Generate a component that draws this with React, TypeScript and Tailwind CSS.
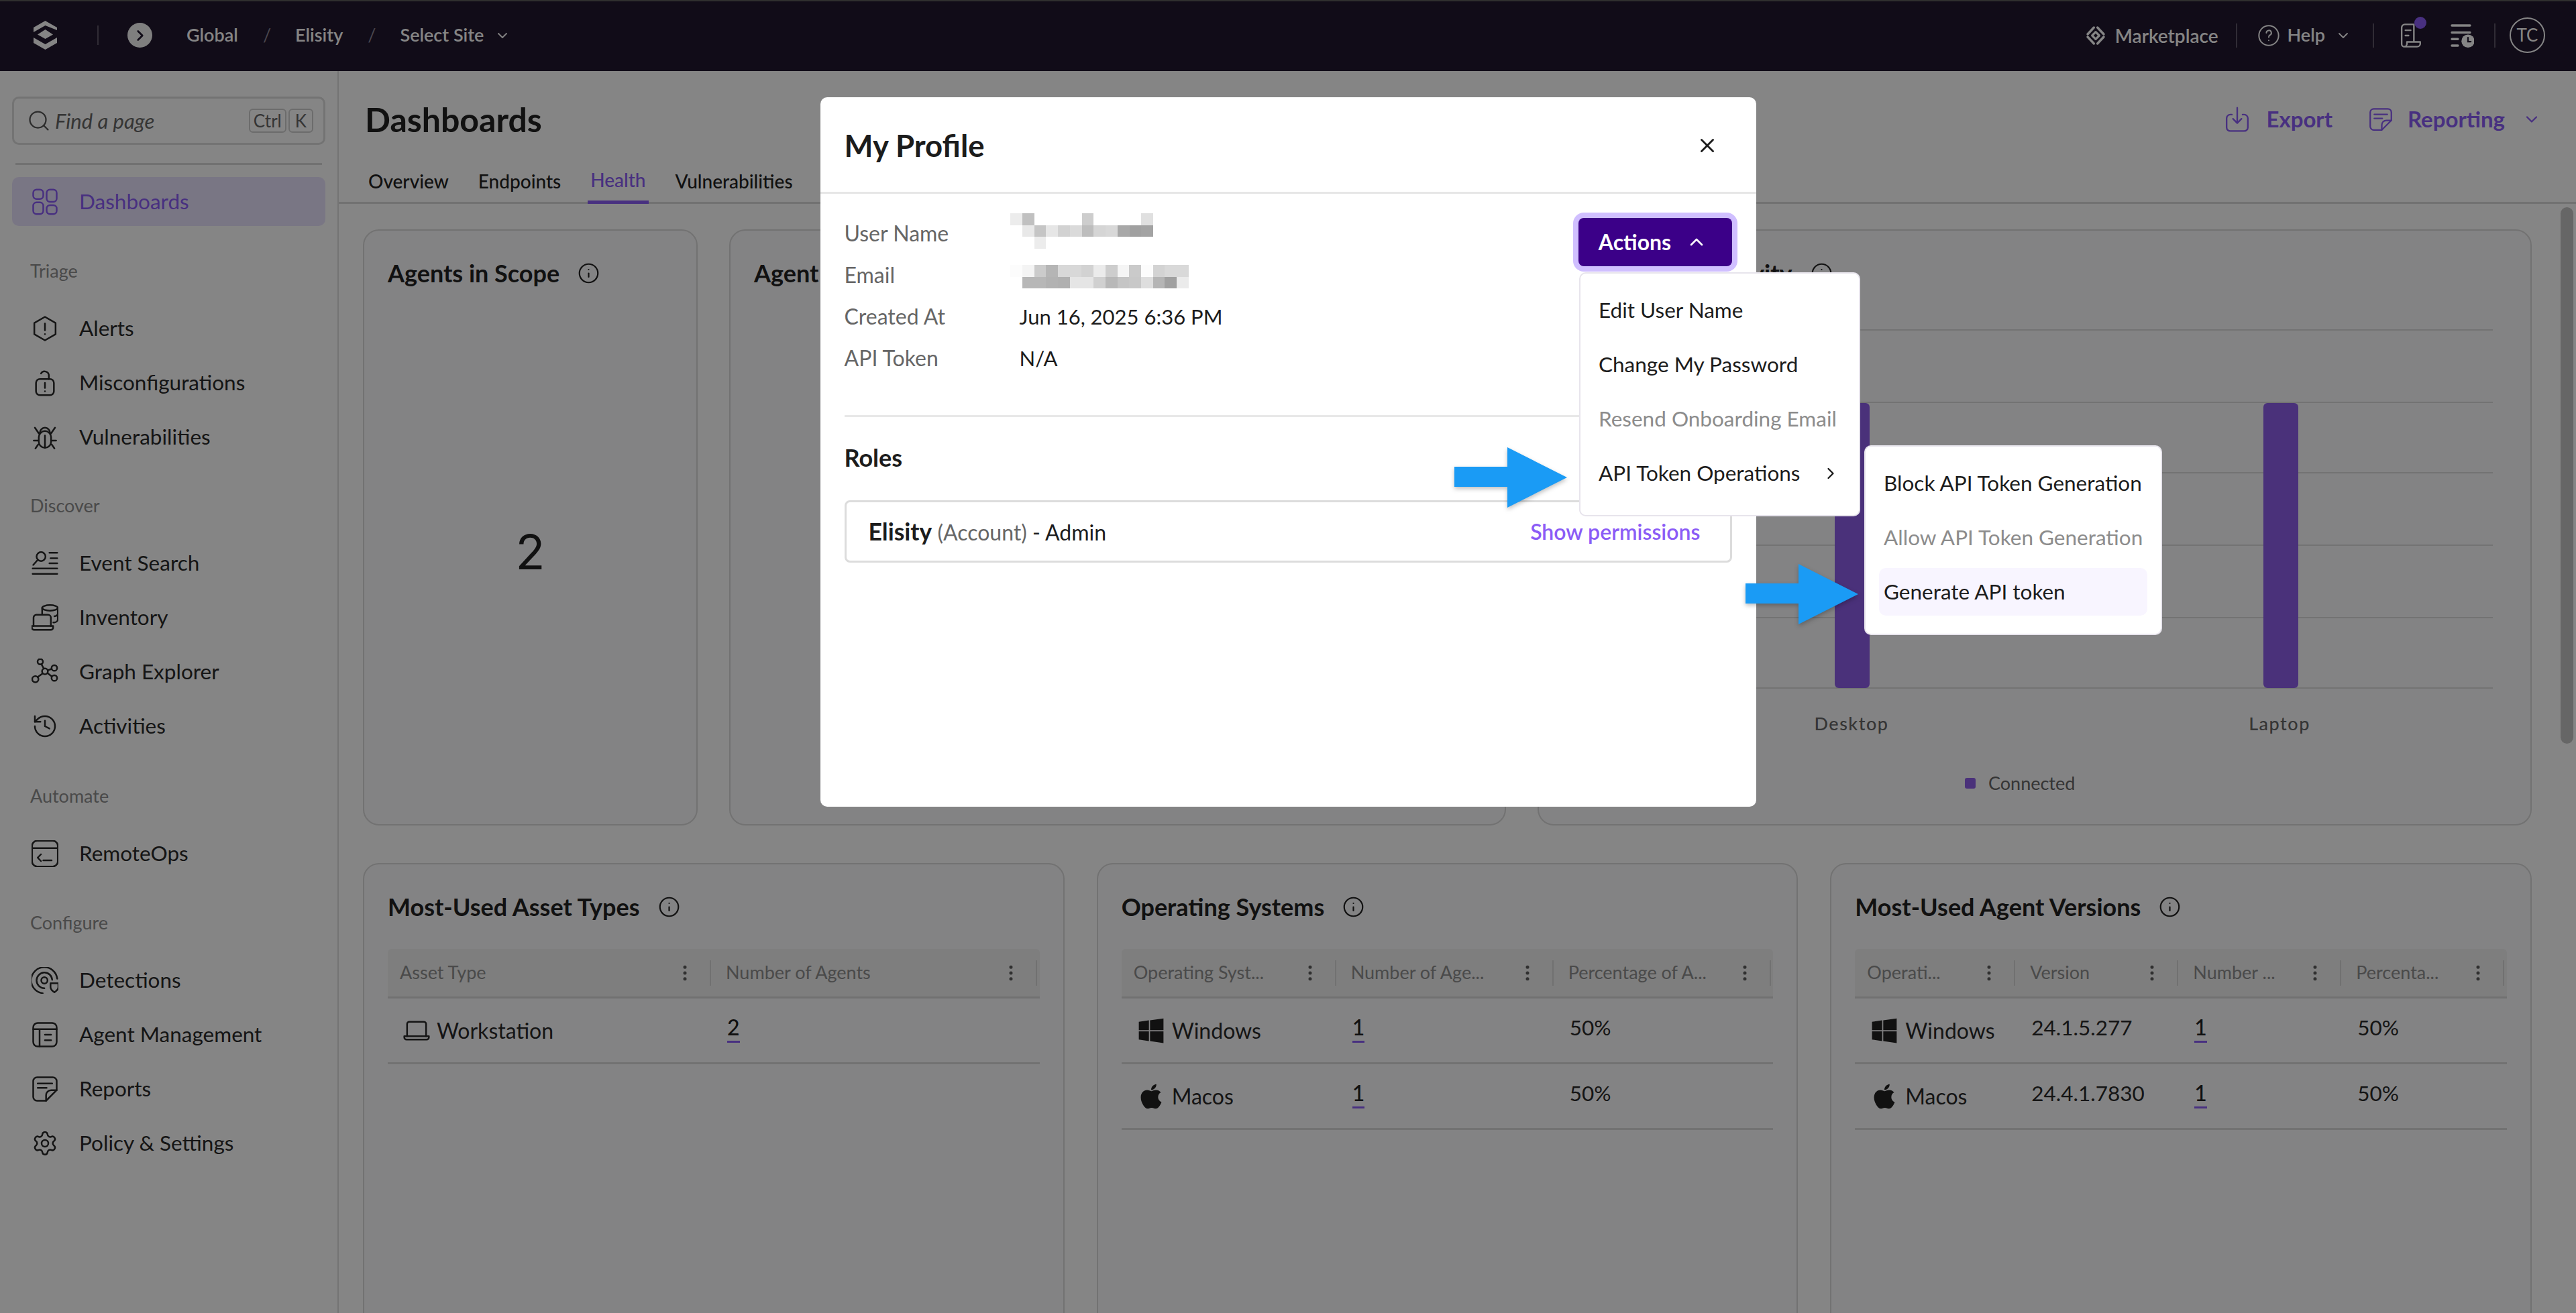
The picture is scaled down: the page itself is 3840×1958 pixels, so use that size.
import React from 'react'
import { ChevronDown, ChevronRight, ChevronUp, EllipsisVertical, History, Info, Search, Settings, X } from 'lucide-react'
import { FaApple, FaWindows } from 'react-icons/fa'

type IconProps = { className?: string }

const Svg: React.FC<React.PropsWithChildren<IconProps>> = ({ className, children }) => (
  <svg viewBox="0 0 24 24" fill="none" stroke="currentColor" strokeWidth={1.5} strokeLinecap="round" strokeLinejoin="round" className={className}>
    {children}
  </svg>
)

const DashboardsIcon = (p: IconProps) => (
  <Svg {...p}>
    <rect x="1.5" y="1" width="9" height="8.5" rx="3" />
    <rect x="1.5" y="12.5" width="9" height="10.5" rx="3" />
    <rect x="13.5" y="1" width="9" height="11" rx="3" />
    <rect x="13.5" y="15" width="9" height="8" rx="3" />
  </Svg>
)
const AlertIcon = (p: IconProps) => (
  <Svg {...p}>
    <path d="M12 1.5 21.5 7v10L12 22.5 2.5 17V7z" />
    <path d="M12 7.5v6M12 17v.01" />
  </Svg>
)
const LockIcon = (p: IconProps) => (
  <Svg {...p}>
    <rect x="4" y="8.5" width="16" height="14.5" rx="3.5" />
    <path d="M8.5 3.5A3.8 3.8 0 0 1 15.5 5.5V8.5" />
    <path d="M12 12v4.5M12 19.5v.01" />
  </Svg>
)
const BugIcon = (p: IconProps) => (
  <Svg {...p}>
    <path d="M6.5 12a5.5 5.5 0 0 1 11 0v4a5.5 5.5 0 0 1-11 0z" />
    <path d="M7.5 8a4.5 4.5 0 0 1 9 0M12 10.5V21.5M6.500 15H2M17.500 15H22M3 3.500l3.500 5M21 3.500l-3.500 5M3.500 22l2.500-3.500M20.500 22 18 18.500" />
  </Svg>
)
const EventIcon = (p: IconProps) => (
  <Svg {...p}>
    <circle cx="8.500" cy="6" r="4" />
    <path d="M5.500 9 1.500 13.500M16 2.500h7M17 7.500h6M16 12h7M1 16.700h22M1 21.500h22" />
  </Svg>
)
const InventoryIcon = (p: IconProps) => (
  <Svg {...p}>
    <path d="M1.800 19.500V12a2.500 2.500 0 0 1 2.500-2.500h10.500a2.500 2.500 0 0 1 2.500 2.500v7.500" />
    <path d="M0.300 19.500h19v1.500a2 2 0 0 1-2 2H2.300a2 2 0 0 1-2-2z" />
    <ellipse cx="16.500" cy="3.300" rx="7" ry="2.500" />
    <path d="M9.500 3.300v6M23.500 3.300v10a3 3 0 0 1-3 3h-1M23.500 8.500c0 1.200-1.500 2-3 2.300" />
  </Svg>
)
const GraphIcon = (p: IconProps) => (
  <Svg {...p}>
    <circle cx="12" cy="11.500" r="2.600" />
    <circle cx="7.800" cy="2.800" r="2.400" />
    <circle cx="20.400" cy="8.500" r="2.500" />
    <circle cx="20.400" cy="17.500" r="2.500" />
    <circle cx="3.400" cy="18.500" r="2.800" />
    <path d="M8.800 5 11 9M14.500 10.600l3.500-1.300M14.300 13l3.800 3M10 13.300l-4.600 3.400" />
  </Svg>
)
const TerminalIcon = (p: IconProps) => (
  <Svg {...p}>
    <rect x="0.500" y="0.500" width="23" height="23" rx="4.500" />
    <path d="M0.500 7h23M8.400 12.600 5.500 15.600l2.900 3M10.500 18h7.500" />
  </Svg>
)
const DetectionIcon = (p: IconProps) => (
  <Svg {...p}>
    <circle cx="11.500" cy="12" r="2.800" />
    <path d="M11.500 19A7 7 0 1 1 18.500 11.500M10 23.500A11.700 11.700 0 1 1 23 10.500" />
    <path d="M17 14.500h7v3.500c0 2-2 3.700-3.500 4.700C19 21.700 17 20 17 18z" />
  </Svg>
)
const AgentIcon = (p: IconProps) => (
  <Svg {...p}>
    <rect x="1.500" y="1.500" width="21" height="21" rx="4" />
    <path d="M1.500 7h21M7.200 7v15.500M12 12h5.500M12 17h5.500" />
  </Svg>
)
const ReportIcon = (p: IconProps) => (
  <Svg {...p}>
    <path d="M5 1.500h14a3.500 3.500 0 0 1 3.500 3.500v8L13 22.500H5A3.500 3.500 0 0 1 1.500 19V5A3.500 3.500 0 0 1 5 1.500z" />
    <path d="M22.500 13h-5a4.500 4.500 0 0 0-4.500 4.500v5M5.500 7h13M5.500 11h8" />
  </Svg>
)
const ExportIcon = (p: IconProps) => (
  <Svg {...p}>
    <path d="M7 7.500H5.500a3.500 3.500 0 0 0-3.500 3.500v8.500A3.500 3.500 0 0 0 5.500 23h13a3.500 3.500 0 0 0 3.500-3.500V11a3.500 3.500 0 0 0-3.500-3.500H17" />
    <path d="M12 1v14M8 11.500l4 4 4-4" />
  </Svg>
)
const LaptopIcon = (p: IconProps) => (
  <Svg {...p}>
    <path d="M3.500 17V6a2 2 0 0 1 2-2h13a2 2 0 0 1 2 2v11" />
    <path d="M1 17h22v1a2 2 0 0 1-2 2H3a2 2 0 0 1-2-2z" />
  </Svg>
)
const MarketIcon = (p: IconProps) => (
  <Svg {...p}>
    <path d="M12 8l4 4-4 4-4-4z" strokeWidth={2.400} />
    <path d="M10 3 3 10.500M14 3l7 7.500M10 21 3 13.500M14 21l7-7.500" strokeWidth={2.600} />
  </Svg>
)
const HelpIcon = (p: IconProps) => (
  <Svg {...p}>
    <circle cx="12" cy="12" r="11" />
    <path d="M9.300 9a2.800 2.800 0 1 1 4 2.600c-.9.500-1.300 1-1.300 2.200M12 17.500v.01" />
  </Svg>
)
const ScrollIcon = (p: IconProps) => (
  <Svg {...p}>
    <path d="M4.500 20V4.500a3 3 0 0 1 3-3H16M16 1.500V18M4.500 20a2.500 2.500 0 0 0 2.500 2.500h12a3 3 0 0 0 3-3V18H9.500v1.500a3 3 0 0 1-3 3" />
    <path d="M8 7h5M8 12h3" />
  </Svg>
)
const QueueIcon = (p: IconProps) => (
  <svg viewBox="0 0 24 24" fill="none" stroke="currentColor" strokeWidth={2.200} strokeLinecap="round" className={p.className}>
    <path d="M2 2h18M2 9h18M2 15.500h6M2 22h6" />
    <circle cx="18" cy="17.500" r="6.500" fill="currentColor" stroke="none" />
    <path d="M18 14v4h2.800" stroke="#21172e" strokeWidth={1.500} />
  </svg>
)
const Logo = (p: IconProps) => (
  <svg viewBox="0 0 35 43" fill="currentColor" className={p.className}>
    <polygon points="0,10 17.500,0 35,10 35,14 17.500,7 0,17" />
    <polygon points="17.500,13 29,20.500 17.500,27 6,20.500" />
    <polygon points="0,25 17.500,35 35,25 35,33 17.500,43 0,33" />
  </svg>
)

const Arrow = ({ className }: IconProps) => (
  <svg viewBox="0 0 168 90" className={className}>
    <polygon points="0,29 79,29 79,0 168,45 79,90 79,59 0,59" fill="#1a9bf5" />
  </svg>
)

const Mosaic = ({ rows, className }: { rows: (string | null)[][]; className?: string }) => (
  <svg viewBox={`0 0 ${rows[0].length * 17.700} ${rows.length * 17.500}`} shapeRendering="crispEdges" className={className}>
    {rows.map((row, y) =>
      row.map((c, x) => (c ? <rect key={`${x}-${y}`} x={x * 17.700} y={y * 17.500} width="17.800" height="17.600" fill={c} /> : null)),
    )}
  </svg>
)

const nameBlur = [
  ['#ececec', '#c0c0c0', null, null, null, null, '#cdcdcd', null, null, null, null, '#e0e0e0'],
  [null, '#e8e8e8', '#c5c5c5', '#e6e6e6', '#d2d2d2', '#dadada', '#bdbdbd', '#d5d5d5', '#d8d8d8', '#a8a8a8', '#a0a0a0', '#a3a3a3'],
  [null, null, '#ececec', null, null, null, null, null, null, null, null, null],
]
const mailBlur = [
  ['#fcfcfc', '#f4f4f4', '#cbcbcb', '#b5b5b5', '#d8d8d8', '#d8d8d8', '#d2d2d2', '#ebebeb', '#cdcdcd', '#f5f5f5', '#cacaca', '#fcfcfc', '#d3d3d3', '#d9d9d9', '#d9d9d9'],
  [null, '#b7b7b7', '#b7b7b7', '#b2b2b2', '#b0b0b0', '#e5e5e5', '#e5e5e5', '#d0d0d0', '#b8b8b8', '#c5c5c5', '#c8c8c8', '#dedede', '#b5b5b5', '#a0a0a0', '#ebebeb'],
]

const NavRow = ({ icon: Icon, label }: { icon: React.FC<IconProps>; label: string }) => (
  <div className="flex h-[81px] items-center pl-[29px] text-[31.5px] text-[#2a2a2a]">
    <Icon className="h-[40px] w-[40px] shrink-0" />
    <span className="ml-[31px]">{label}</span>
  </div>
)

const navGroups: { title: string; gap: string; items: [React.FC<IconProps>, string][] }[] = [
  { title: 'Triage', gap: 'mt-[40px]', items: [[AlertIcon, 'Alerts'], [LockIcon, 'Misconfigurations'], [BugIcon, 'Vulnerabilities']] },
  { title: 'Discover', gap: 'mt-[40px]', items: [[EventIcon, 'Event Search'], [InventoryIcon, 'Inventory'], [GraphIcon, 'Graph Explorer'], [(p) => <History strokeWidth={1.500} className={p.className} />, 'Activities']] },
  { title: 'Automate', gap: 'mt-[42px]', items: [[TerminalIcon, 'RemoteOps']] },
  { title: 'Configure', gap: 'mt-[41px]', items: [[DetectionIcon, 'Detections'], [AgentIcon, 'Agent Management'], [ReportIcon, 'Reports'], [(p) => <Settings strokeWidth={1.500} className={p.className} />, 'Policy & Settings']] },
]

const Sidebar = () => (
  <aside className="flex w-[505px] shrink-0 flex-col border-r-2 border-[#dedede] px-[18px]">
    <div className="mt-[38px] flex h-[72px] items-center rounded-[10px] border-[3px] border-[#dcdcdc] pl-[19px] pr-[15px]">
      <Search className="h-[36px] w-[36px] text-[#555]" strokeWidth={1.500} />
      <span className="ml-[6px] flex-1 text-[31px] italic text-[#666]">Find a page</span>
      <span className="rounded-[6px] border-2 border-[#d0d0d0] px-[5px] text-[26px] leading-[32px] text-[#666]">Ctrl</span>
      <span className="ml-[3px] rounded-[6px] border-2 border-[#d0d0d0] px-[8px] text-[26px] leading-[32px] text-[#666]">K</span>
    </div>
    <div className="mx-[5px] mt-[27px] h-[3px] bg-[#d8d8d8]" />
    <div className="mt-[18px] flex h-[73px] items-center rounded-[10px] bg-[#e9e2fe] pl-[29px] text-[31.5px] text-[#8b5cf6]">
      <DashboardsIcon className="h-[40px] w-[40px]" />
      <span className="ml-[31px]">Dashboards</span>
    </div>
    <div className="mt-[5px]">
      {navGroups.map((g) => (
        <div key={g.title} className={g.gap}>
          <div className="mb-[22px] flex h-[45px] items-center pl-[27px] text-[27px] text-[#8e8e8e]">{g.title}</div>
          {g.items.map(([icon, label]) => (
            <NavRow key={label} icon={icon} label={label} />
          ))}
        </div>
      ))}
    </div>
  </aside>
)

const TopBar = () => (
  <header className="flex h-[106px] shrink-0 items-center border-t-2 border-[#5a5a5a] bg-[#21172e] pb-[3px] text-[27px] font-semibold text-white">
    <Logo className="ml-[50px] h-[43px] w-[35px]" />
    <div className="ml-[60px] h-[29px] w-[2px] bg-[#5c5566]" />
    <div className="ml-[43px] flex h-[37px] w-[37px] items-center justify-center rounded-full bg-[#f4f4f4] text-[#21172e]">
      <ChevronRight className="h-[26px] w-[26px]" strokeWidth={2.500} />
    </div>
    <span className="ml-[51px]">Global</span>
    <span className="ml-[37px] font-normal text-[#8d8696]">/</span>
    <span className="ml-[36px]">Elisity</span>
    <span className="ml-[37px] font-normal text-[#8d8696]">/</span>
    <span className="ml-[36px]">Select Site</span>
    <ChevronDown className="ml-[16px] h-[24px] w-[24px]" strokeWidth={1.800} />
    <div className="flex-1" />
    <MarketIcon className="h-[38px] w-[32px]" />
    <span className="ml-[13px] text-[28px]">Marketplace</span>
    <div className="ml-[26px] h-[36px] w-[2px] bg-[#5c5566]" />
    <HelpIcon className="ml-[31px] h-[32px] w-[32px]" />
    <span className="ml-[12px]">Help</span>
    <ChevronDown className="ml-[15px] h-[24px] w-[24px]" strokeWidth={1.800} />
    <div className="ml-[32px] h-[36px] w-[2px] bg-[#5c5566]" />
    <div className="relative ml-[34px] h-[38px] w-[38px]">
      <ScrollIcon className="h-[38px] w-[38px]" />
      <span className="absolute -right-[6px] -top-[9px] h-[18px] w-[18px] rounded-full bg-[#8b5cf6]" />
    </div>
    <QueueIcon className="ml-[41px] h-[36px] w-[36px]" />
    <div className="ml-[30px] h-[36px] w-[2px] bg-[#5c5566]" />
    <div className="ml-[21px] mr-[46px] flex h-[53px] w-[53px] items-center justify-center rounded-full border-2 border-white text-[26px] font-normal">TC</div>
  </header>
)

const tabs = ['Overview', 'Endpoints', 'Health', 'Vulnerabilities']

const PageHead = () => (
  <div className="h-[198px] shrink-0 border-b-[3px] border-[#d8d8d8]">
    <div className="flex h-[146px] items-center pb-[2px] pl-[39px] pr-[52px]">
      <h1 className="flex-1 text-[50px] font-bold leading-tight text-[#222]">Dashboards</h1>
      <div className="flex items-center text-[33px] font-bold text-[#8b5cf6]">
        <ExportIcon className="h-[38px] w-[38px]" />
        <span className="ml-[24px]">Export</span>
        <ReportIcon className="ml-[54px] h-[40px] w-[36px]" />
        <span className="ml-[22px]">Reporting</span>
        <ChevronDown className="ml-[26px] h-[28px] w-[28px]" strokeWidth={2} />
      </div>
    </div>
    <div className="flex h-[52px] items-start gap-[36px] pl-[40px] text-[28px] font-medium text-[#222]">
      {tabs.map((t) => (
        <div key={t} className={`flex h-[52px] items-center px-[4px] pb-[16px] ${t === 'Health' ? 'border-b-[5px] border-[#8b5cf6] text-[#8b5cf6]' : ''}`}>
          {t}
        </div>
      ))}
    </div>
  </div>
)

const Card: React.FC<React.PropsWithChildren<{ className?: string }>> = ({ className, children }) => (
  <section className={`rounded-[24px] border-2 border-[#dadada] bg-[#fcfbfd] ${className ?? ''}`}>{children}</section>
)

const CardTitle = ({ text, indent = 'pl-[35px]' }: { text: string; indent?: string }) => (
  <div className={`flex h-[126px] items-center text-[36px] font-bold text-[#222] ${indent}`}>
    <span>{text}</span>
    <Info className="ml-[27px] h-[33px] w-[33px]" strokeWidth={1.600} />
  </div>
)

const gridY = [12, 120, 225, 333, 441, 546]

const ConnectivityChart = () => (
  <svg viewBox="0 0 1340 720" className="ml-[83px] mt-[10px] h-[720px] w-[1340px]">
    {gridY.map((y) => (
      <line key={y} x1="0" x2="1339" y1={y} y2={y} stroke="#dddddd" strokeWidth="2" />
    ))}
    <rect x="358" y="121" width="52" height="425" rx="6" fill="#8f5fea" />
    <rect x="997" y="121" width="52" height="425" rx="6" fill="#8f5fea" />
    <text x="383" y="609" textAnchor="middle" fontSize="27" fontWeight="500" letterSpacing="1.500" fill="#666">Desktop</text>
    <text x="1021" y="609" textAnchor="middle" fontSize="27" fontWeight="500" letterSpacing="1.500" fill="#666">Laptop</text>
    <rect x="552" y="680" width="16" height="16" rx="3" fill="#8f5fea" />
    <text x="587" y="698" fontSize="27" fill="#666">Connected</text>
  </svg>
)

type Col = { label: string; width: number }
type Cell = React.ReactNode

const Num = ({ v }: { v: string }) => (
  <span className="inline-block h-[41px] border-b-[3px] border-[#8b5cf6] text-[32px] font-medium leading-[36px] text-[#222]">{v}</span>
)

const OsName = ({ win, name }: { win?: boolean; name: string }) => (
  <div className="flex h-full items-center">
    {win ? <FaWindows className="h-[42px] w-[42px] text-[#222]" /> : <FaApple className="h-[42px] w-[42px] text-[#222]" />}
    <span className="ml-[10px] text-[32px] text-[#2a2a2a]">{name}</span>
  </div>
)

const Plain = ({ v }: { v: string }) => <span className="text-[31.5px] leading-[36px] text-[#2a2a2a]">{v}</span>

const DataTable = ({ cols, rows }: { cols: Col[]; rows: Cell[][] }) => (
  <div className="mx-[35px]">
    <div className="flex h-[74px] rounded-t-[6px] border-b-[3px] border-[#d8d8d8] bg-[#f1f1f1]">
      {cols.map((c) => (
        <div key={c.label} style={{ width: c.width }} className="flex shrink-0 items-center pl-[18px] pr-[4px] text-[27px] text-[#8e8e8e]">
          <span className="min-w-0 flex-1 whitespace-nowrap">{c.label}</span>
          <EllipsisVertical className="mr-[22px] h-[30px] w-[30px] text-[#5c5c5c]" strokeWidth={2} />
          <div className="h-[38px] w-[2px] bg-[#d8d8d8]" />
        </div>
      ))}
    </div>
    {rows.map((cells, i) => (
      <div key={i} className="flex h-[98px] border-b-[3px] border-[#dadada]">
        {cells.map((cell, j) => (
          <div key={j} style={{ width: cols[j].width }} className="shrink-0 pl-[20px] pt-[25px]">
            {cell}
          </div>
        ))}
      </div>
    ))}
  </div>
)

const osCell = (win: boolean, name: string) => (
  <div className="-ml-[16px] -mt-[25px] h-[95px] pl-[19px]">
    <OsName win={win} name={name} />
  </div>
)

const Dashboard = () => (
  <main className="flex min-w-0 flex-1 flex-col">
    <PageHead />
    <div className="min-h-0 flex-1 overflow-hidden pl-[36px] pr-[66px] pt-[38px]">
      <div className="flex h-[889px] gap-[47px]">
        <Card className="flex w-[499px] shrink-0 flex-col">
          <CardTitle text="Agents in Scope" />
          <div className="flex flex-1 items-center justify-center pb-[54px] [font-family:Inter,sans-serif] text-[72px] text-[#222]">2</div>
        </Card>
        <Card className="w-[1158px] shrink-0">
          <CardTitle text="Agent" />
        </Card>
        <Card className="min-w-0 flex-1 overflow-hidden">
          <CardTitle text="Agents' Connectivity" indent="pl-[44px]" />
          <ConnectivityChart />
        </Card>
      </div>
      <div className="mt-[56px] grid h-[800px] grid-cols-3 gap-[48px]">
        <Card>
          <CardTitle text="Most-Used Asset Types" />
          <DataTable
            cols={[{ label: 'Asset Type', width: 486 }, { label: 'Number of Agents', width: 486 }]}
            rows={[[
              <div className="-mt-[25px] flex h-[95px] items-center pl-[3px] text-[32px] text-[#2a2a2a]"><LaptopIcon className="h-[40px] w-[40px]" /><span className="ml-[10px]">Workstation</span></div>,
              <Num v="2" />,
            ]]}
          />
        </Card>
        <Card>
          <CardTitle text="Operating Systems" />
          <DataTable
            cols={[{ label: 'Operating Syst...', width: 324 }, { label: 'Number of Age...', width: 324 }, { label: 'Percentage of A...', width: 324 }]}
            rows={[
              [osCell(true, 'Windows'), <Num v="1" />, <Plain v="50%" />],
              [osCell(false, 'Macos'), <Num v="1" />, <Plain v="50%" />],
            ]}
          />
        </Card>
        <Card>
          <CardTitle text="Most-Used Agent Versions" />
          <DataTable
            cols={[{ label: 'Operati...', width: 243 }, { label: 'Version', width: 243 }, { label: 'Number ...', width: 243 }, { label: 'Percenta...', width: 243 }]}
            rows={[
              [osCell(true, 'Windows'), <Plain v="24.1.5.277" />, <Num v="1" />, <Plain v="50%" />],
              [osCell(false, 'Macos'), <Plain v="24.4.1.7830" />, <Num v="1" />, <Plain v="50%" />],
            ]}
          />
        </Card>
      </div>
    </div>
  </main>
)

const InfoRow = ({ label, children }: { label: string; children: React.ReactNode }) => (
  <div className="flex h-[62px] items-center text-[32px]">
    <span className="w-[261px] text-[#666]">{label}</span>
    <span className="text-[31px] text-[#1c1c1c]">{children}</span>
  </div>
)

const ProfileModal = () => (
  <div className="mx-auto mt-[145px] h-[1058px] w-[1395px] rounded-[10px] bg-white">
    <div className="flex h-[144px] items-center justify-between border-b-[3px] border-[#e6e6e6] pl-[36px] pr-[56px] pt-[3px]">
      <h2 className="text-[45.5px] font-bold text-[#1c1c1c]">My Profile</h2>
      <X className="h-[34px] w-[34px] text-[#1c1c1c]" strokeWidth={2} />
    </div>
    <div className="px-[36px]">
      <div className="flex items-start justify-between pt-[28px]">
        <div>
          <InfoRow label="User Name"><Mosaic rows={nameBlur} className="ml-[-14px] mt-[-7px] h-[53px] w-[213px]" /></InfoRow>
          <InfoRow label="Email"><Mosaic rows={mailBlur} className="ml-[-14px] mt-[4px] h-[35px] w-[266px]" /></InfoRow>
          <InfoRow label="Created At">Jun 16, 2025 6:36 PM</InfoRow>
          <InfoRow label="API Token">N/A</InfoRow>
        </div>
        <button className="mt-[8px] flex h-[72px] w-[229px] items-center justify-center rounded-[8px] bg-[#3b0088] pr-[6px] text-[32px] font-bold text-white ring-[8px] ring-[#d0bfff]">
          Actions
          <ChevronUp className="ml-[22px] h-[32px] w-[32px]" strokeWidth={2} />
        </button>
      </div>
      <div className="mt-[54px] h-[3px] bg-[#e8e8e8]" />
      <h3 className="mt-[38px] text-[36px] font-bold leading-[44px] text-[#1c1c1c]">Roles</h3>
      <div className="mt-[42px] flex h-[93px] items-center justify-between rounded-[8px] border-[3px] border-[#dcdcdc] pl-[33px] pr-[44px]">
        <span className="text-[32px] text-[#1c1c1c]">
          <b className="text-[35.5px] font-bold">Elisity</b> <span className="text-[#666]">(Account)</span> - Admin
        </span>
        <span className="text-[32px] font-semibold text-[#8b5cf6]">Show permissions</span>
      </div>
    </div>
  </div>
)

const MenuItem = ({ label, muted, active, chevron }: { label: string; muted?: boolean; active?: boolean; chevron?: boolean }) => (
  <div className={`mx-[20px] mb-[10px] flex h-[71px] items-center justify-between whitespace-nowrap rounded-[10px] pl-[7px] pr-[8px] text-[31.5px] ${muted ? 'text-[#8c8c8c]' : 'text-[#1c1c1c]'} ${active ? 'bg-[#f8f5ff]' : ''}`}>
    {label}
    {chevron && <ChevronRight className="h-[28px] w-[28px]" strokeWidth={2} />}
  </div>
)

const Menu: React.FC<React.PropsWithChildren<{ className: string }>> = ({ className, children }) => (
  <div className={`absolute rounded-[10px] border-2 border-[#e7e4ec] bg-white pb-[17px] pt-[19px] ${className}`}>{children}</div>
)

export default function App() {
  return (
    <div className="relative h-[1958px] w-[3840px] overflow-hidden bg-white [font-family:Lato,sans-serif]">
      <TopBar />
      <div className="flex h-[1852px]">
        <Sidebar />
        <Dashboard />
      </div>
      <div className="absolute right-[4px] top-[309px] h-[800px] w-[19px] rounded-full bg-[#c4c4c4]" />

      <div className="absolute inset-0 bg-black/[0.48]">
        <ProfileModal />
      </div>

      <Menu className="left-[2354px] top-[406px] w-[419px]">
        <MenuItem label="Edit User Name" />
        <MenuItem label="Change My Password" />
        <MenuItem label="Resend Onboarding Email" muted />
        <MenuItem label="API Token Operations" chevron />
      </Menu>
      <Menu className="left-[2779px] top-[664px] w-[444px]">
        <MenuItem label="Block API Token Generation" />
        <MenuItem label="Allow API Token Generation" muted />
        <MenuItem label="Generate API token" active />
      </Menu>
      <Arrow className="absolute left-[2168px] top-[667px] h-[90px] w-[168px] drop-shadow-[0_3px_3px_rgba(0,0,0,0.25)]" />
      <Arrow className="absolute left-[2602px] top-[841px] h-[90px] w-[168px] drop-shadow-[0_3px_3px_rgba(0,0,0,0.25)]" />
    </div>
  )
}
